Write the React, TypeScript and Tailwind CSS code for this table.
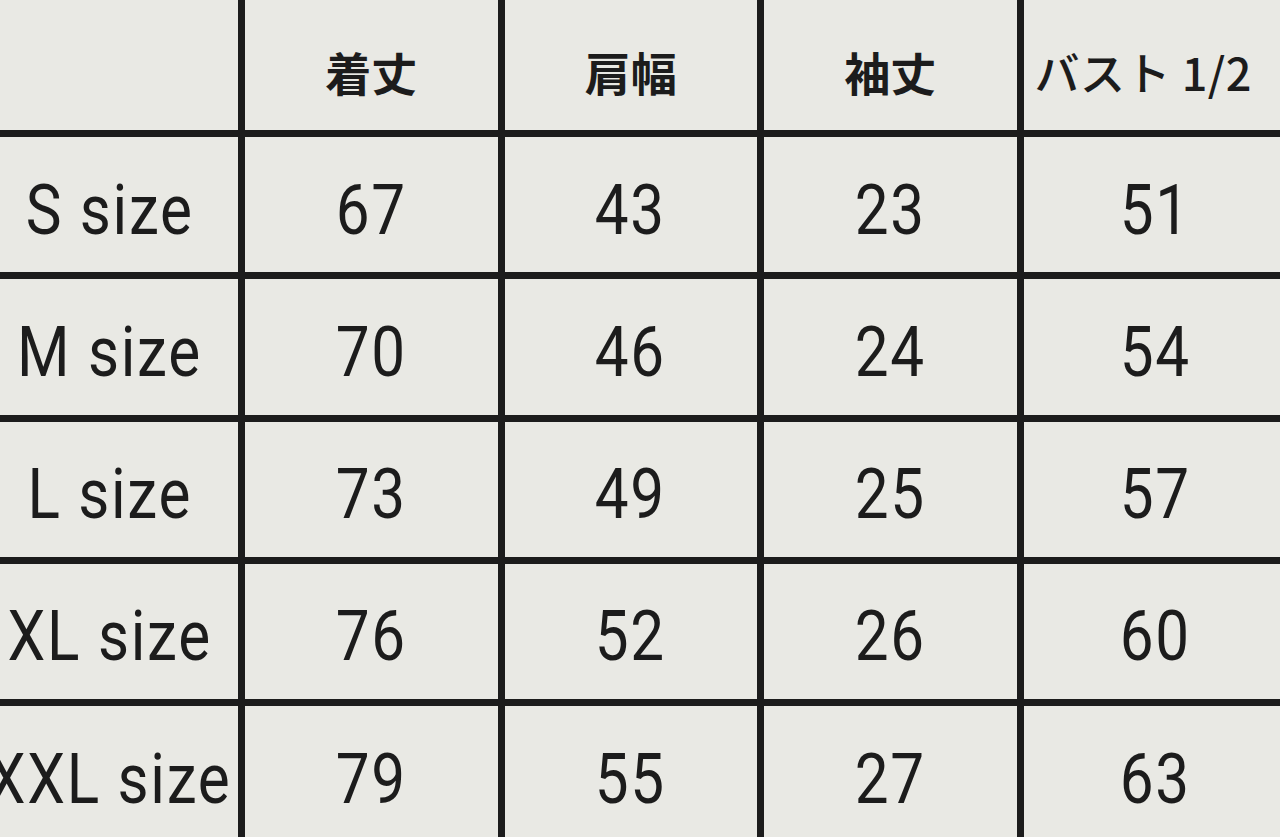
import React from "react";

const headers = ["着丈", "肩幅", "袖丈"];
const rows: [string, string[]][] = [
  ["S size", ["67", "43", "23", "51"]],
  ["M size", ["70", "46", "24", "54"]],
  ["L size", ["73", "49", "25", "57"]],
  ["XL size", ["76", "52", "26", "60"]],
  ["XXL size", ["79", "55", "27", "63"]],
];

const cell = "bg-[#e9e9e4] flex items-center justify-center overflow-hidden";
const num =
  "inline-block scale-x-[0.86] text-[70px] leading-none text-[#1c1c1c] font-['Roboto',sans-serif] tracking-[2px] whitespace-nowrap";

export default function App() {
  return (
    <div className="w-[1280px] h-[837px] overflow-hidden bg-[#1c1c1c]">
      <div className="ml-[-19px] grid grid-cols-[257px_252.5px_252.5px_252.5px_300px] grid-rows-[130px_repeat(5,135.25px)] gap-[7px] bg-[#1c1c1c] w-[1330px]">
        <div className={cell}></div>
        {headers.map((h) => (
          <div key={h} className={cell}>
            <span className="text-[46px] leading-none font-bold text-[#1c1c1c] font-['Noto_Sans_CJK_JP',sans-serif] mt-[12px]">
              {h}
            </span>
          </div>
        ))}
        <div className={cell + " justify-start"}>
          <span className="ml-[11px] mt-[12px] text-[45px] tracking-[0.5px] leading-none font-medium text-[#1c1c1c] font-['Noto_Sans_CJK_JP',sans-serif] whitespace-nowrap">
            バスト 1/2
          </span>
        </div>
        {rows.map(([label, vals]) => (
          <React.Fragment key={label}>
            <div className={cell}>
              <span className={num + " mt-[10px]"}>{label}</span>
            </div>
            {vals.map((v, i) => (
              <div key={i} className={cell + (i === 3 ? " justify-start" : "")}>
                <span className={num + " mt-[10px]" + (i === 3 ? " ml-[90px]" : "")}>{v}</span>
              </div>
            ))}
          </React.Fragment>
        ))}
      </div>
    </div>
  );
}
